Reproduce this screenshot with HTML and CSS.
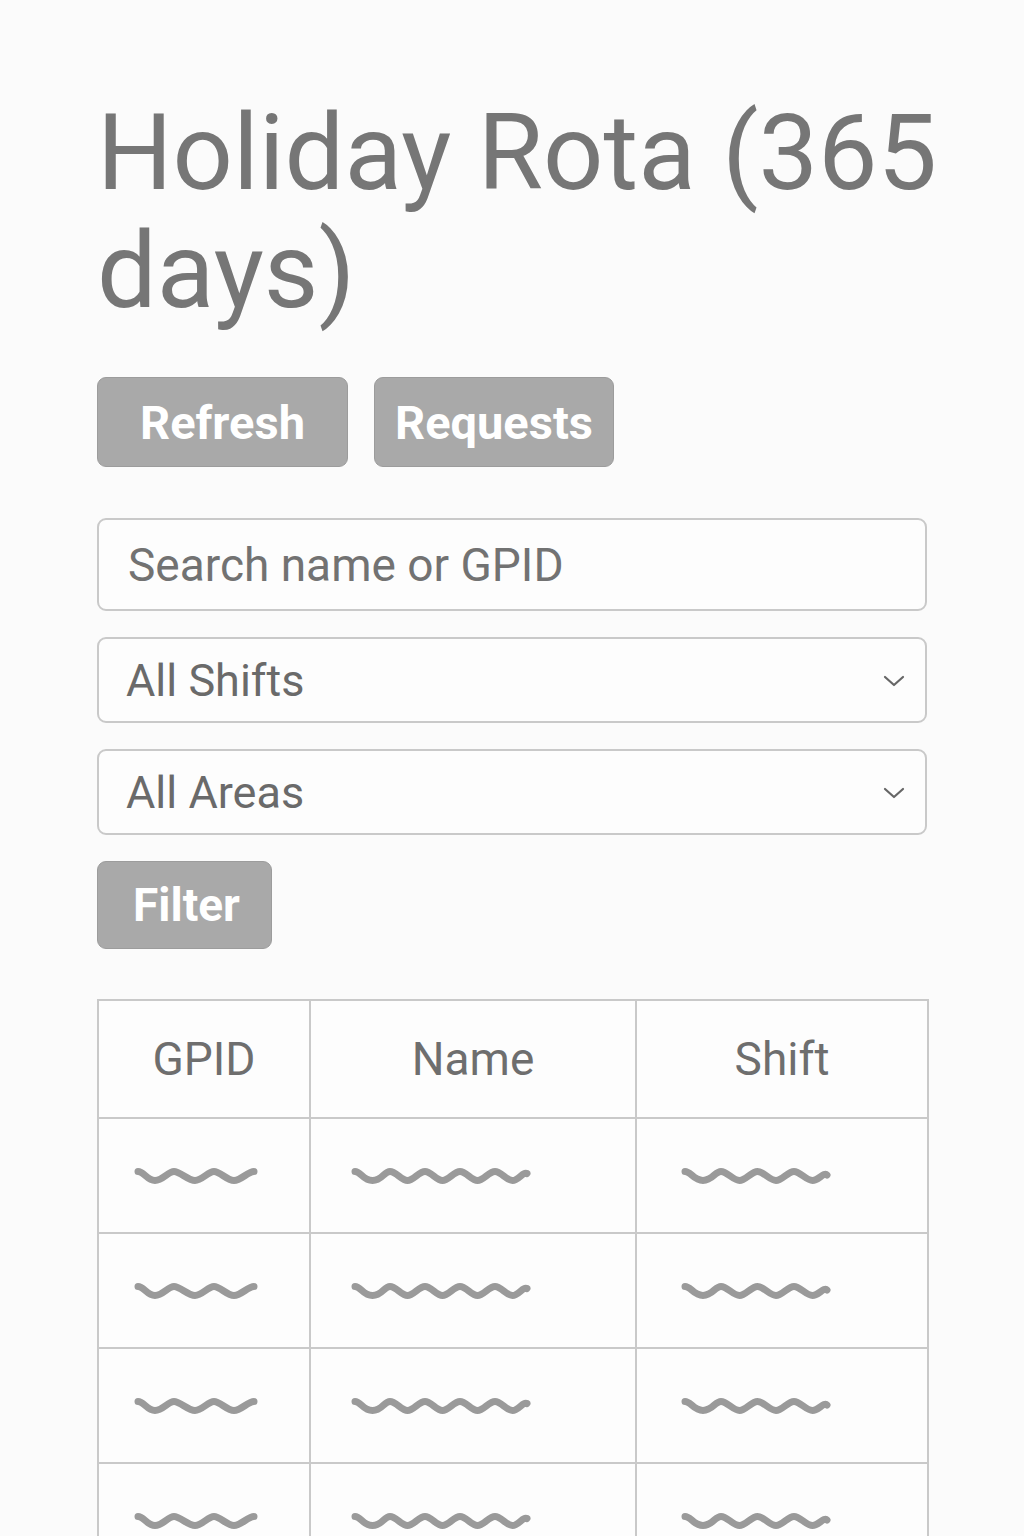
FILE: index.html
```html
<!DOCTYPE html>
<html lang="en">
<head>
<meta charset="utf-8">
<title>Holiday Rota</title>
<link rel="stylesheet" href="styles.css">
</head>
<body>
<main class="page">
  <h1 class="title">Holiday Rota (365 days)</h1>
  <div class="actions">
    <button class="btn btn-refresh">Refresh</button>
    <button class="btn btn-requests">Requests</button>
  </div>
  <form class="filters">
    <input class="field search" type="text" placeholder="Search name or GPID">
    <div class="select-wrap">
      <select class="field select"><option>All Shifts</option></select>
      <svg class="chevron" width="22" height="12" viewBox="0 0 22 12"><path d="M2 2 L11 10 L20 2" fill="none" stroke="#666" stroke-width="2.2" stroke-linecap="round" stroke-linejoin="round"/></svg>
    </div>
    <div class="select-wrap">
      <select class="field select"><option>All Areas</option></select>
      <svg class="chevron" width="22" height="12" viewBox="0 0 22 12"><path d="M2 2 L11 10 L20 2" fill="none" stroke="#666" stroke-width="2.2" stroke-linecap="round" stroke-linejoin="round"/></svg>
    </div>
    <div><button type="button" class="btn btn-filter">Filter</button></div>
  </form>
  <table class="rota">
    <colgroup>
      <col class="col-gpid"><col class="col-name"><col class="col-shift">
    </colgroup>
    <thead>
      <tr><th>GPID</th><th>Name</th><th>Shift</th></tr>
    </thead>
    <tbody>
      <tr>
        <td class="td-gpid"><svg class="sq" width="124" height="22" viewBox="0 0 124 22"><path d="M4 6.5 C10 6.5 13 15.5 21 15.5 S34 6.5 40 6.5 S54 15.5 61 15.5 S74 6.5 80 6.5 S93 15.5 100 15.5 S114 6.5 120 6.5" fill="none" stroke="#9a9a9a" stroke-width="7" stroke-linecap="round"/></svg></td>
        <td class="td-name"><svg class="sq" width="180" height="22" viewBox="0 0 180 22"><path d="M4 6.5 C10 6.5 12 15.5 21.5 15.5 S33 6.5 39 6.5 S50.5 15.5 56.5 15.5 S68 6.5 74 6.5 S85.5 15.5 91.5 15.5 S103 6.5 109 6.5 S120.5 15.5 126.5 15.5 S138 6.5 144 6.5 S155.5 15.5 161.5 15.5 S172 6.5 176 8.5" fill="none" stroke="#9a9a9a" stroke-width="7" stroke-linecap="round"/></svg></td>
        <td class="td-shift"><svg class="sq" width="150" height="22" viewBox="0 0 150 22"><path d="M4 6.5 C10 6.5 12.5 15.5 22 15.5 S34 6.5 40 6.5 S52.5 15.5 58.5 15.5 S70.5 6.5 76.5 6.5 S89 15.5 95 15.5 S107 6.5 113 6.5 S125.5 15.5 131.5 15.5 S143 6.5 146 10" fill="none" stroke="#9a9a9a" stroke-width="7" stroke-linecap="round"/></svg></td>
      </tr>
      <tr>
        <td class="td-gpid"><svg class="sq" width="124" height="22" viewBox="0 0 124 22"><path d="M4 6.5 C10 6.5 13 15.5 21 15.5 S34 6.5 40 6.5 S54 15.5 61 15.5 S74 6.5 80 6.5 S93 15.5 100 15.5 S114 6.5 120 6.5" fill="none" stroke="#9a9a9a" stroke-width="7" stroke-linecap="round"/></svg></td>
        <td class="td-name"><svg class="sq" width="180" height="22" viewBox="0 0 180 22"><path d="M4 6.5 C10 6.5 12 15.5 21.5 15.5 S33 6.5 39 6.5 S50.5 15.5 56.5 15.5 S68 6.5 74 6.5 S85.5 15.5 91.5 15.5 S103 6.5 109 6.5 S120.5 15.5 126.5 15.5 S138 6.5 144 6.5 S155.5 15.5 161.5 15.5 S172 6.5 176 8.5" fill="none" stroke="#9a9a9a" stroke-width="7" stroke-linecap="round"/></svg></td>
        <td class="td-shift"><svg class="sq" width="150" height="22" viewBox="0 0 150 22"><path d="M4 6.5 C10 6.5 12.5 15.5 22 15.5 S34 6.5 40 6.5 S52.5 15.5 58.5 15.5 S70.5 6.5 76.5 6.5 S89 15.5 95 15.5 S107 6.5 113 6.5 S125.5 15.5 131.5 15.5 S143 6.5 146 10" fill="none" stroke="#9a9a9a" stroke-width="7" stroke-linecap="round"/></svg></td>
      </tr>
      <tr>
        <td class="td-gpid"><svg class="sq" width="124" height="22" viewBox="0 0 124 22"><path d="M4 6.5 C10 6.5 13 15.5 21 15.5 S34 6.5 40 6.5 S54 15.5 61 15.5 S74 6.5 80 6.5 S93 15.5 100 15.5 S114 6.5 120 6.5" fill="none" stroke="#9a9a9a" stroke-width="7" stroke-linecap="round"/></svg></td>
        <td class="td-name"><svg class="sq" width="180" height="22" viewBox="0 0 180 22"><path d="M4 6.5 C10 6.5 12 15.5 21.5 15.5 S33 6.5 39 6.5 S50.5 15.5 56.5 15.5 S68 6.5 74 6.5 S85.5 15.5 91.5 15.5 S103 6.5 109 6.5 S120.5 15.5 126.5 15.5 S138 6.5 144 6.5 S155.5 15.5 161.5 15.5 S172 6.5 176 8.5" fill="none" stroke="#9a9a9a" stroke-width="7" stroke-linecap="round"/></svg></td>
        <td class="td-shift"><svg class="sq" width="150" height="22" viewBox="0 0 150 22"><path d="M4 6.5 C10 6.5 12.5 15.5 22 15.5 S34 6.5 40 6.5 S52.5 15.5 58.5 15.5 S70.5 6.5 76.5 6.5 S89 15.5 95 15.5 S107 6.5 113 6.5 S125.5 15.5 131.5 15.5 S143 6.5 146 10" fill="none" stroke="#9a9a9a" stroke-width="7" stroke-linecap="round"/></svg></td>
      </tr>
      <tr>
        <td class="td-gpid"><svg class="sq" width="124" height="22" viewBox="0 0 124 22"><path d="M4 6.5 C10 6.5 13 15.5 21 15.5 S34 6.5 40 6.5 S54 15.5 61 15.5 S74 6.5 80 6.5 S93 15.5 100 15.5 S114 6.5 120 6.5" fill="none" stroke="#9a9a9a" stroke-width="7" stroke-linecap="round"/></svg></td>
        <td class="td-name"><svg class="sq" width="180" height="22" viewBox="0 0 180 22"><path d="M4 6.5 C10 6.5 12 15.5 21.5 15.5 S33 6.5 39 6.5 S50.5 15.5 56.5 15.5 S68 6.5 74 6.5 S85.5 15.5 91.5 15.5 S103 6.5 109 6.5 S120.5 15.5 126.5 15.5 S138 6.5 144 6.5 S155.5 15.5 161.5 15.5 S172 6.5 176 8.5" fill="none" stroke="#9a9a9a" stroke-width="7" stroke-linecap="round"/></svg></td>
        <td class="td-shift"><svg class="sq" width="150" height="22" viewBox="0 0 150 22"><path d="M4 6.5 C10 6.5 12.5 15.5 22 15.5 S34 6.5 40 6.5 S52.5 15.5 58.5 15.5 S70.5 6.5 76.5 6.5 S89 15.5 95 15.5 S107 6.5 113 6.5 S125.5 15.5 131.5 15.5 S143 6.5 146 10" fill="none" stroke="#9a9a9a" stroke-width="7" stroke-linecap="round"/></svg></td>
      </tr>
    </tbody>
  </table>
</main>
</body>
</html>
```

FILE: styles.css
```css
html, body {
  margin: 0;
  padding: 0;
  background: #fbfbfb;
}

body {
  font-family: Roboto, "Liberation Sans", Arial, sans-serif;
  color: #777;
}

.page {
  width: 830px;
  padding: 94px 0 0 97px;
}

.title {
  width: 860px;
  margin: 0;
  font-size: 106px;
  line-height: 118px;
  font-weight: 400;
  color: #767676;
}

.actions {
  display: flex;
  gap: 26px;
  margin-top: 47px;
}

.btn {
  height: 90px;
  padding: 0;
  background: #a9a9a9;
  border: 1px solid #9c9c9c;
  border-radius: 9px;
  color: #fff;
  font-family: Roboto, "Liberation Sans", Arial, sans-serif;
  font-weight: 700;
  font-size: 47px;
  cursor: pointer;
}

.btn-refresh { width: 251px; }
.btn-requests { width: 240px; }
.btn-filter { width: 175px; height: 88px; font-size: 46px; padding-left: 4px; }

.filters {
  display: flex;
  flex-direction: column;
  gap: 26px;
  margin-top: 51px;
}

.field {
  display: block;
  width: 100%;
  box-sizing: border-box;
  border: 2px solid #c9c9c9;
  border-radius: 9px;
  background: #fdfdfd;
  font-family: Roboto, "Liberation Sans", Arial, sans-serif;
  color: #6a6a6a;
  outline: none;
}

.search {
  height: 93px;
  padding: 0 29px;
  font-size: 46px;
}

.search::placeholder {
  color: #727272;
}

.select-wrap {
  position: relative;
}

.select {
  height: 86px;
  padding: 0 27px;
  font-size: 45px;
  appearance: none;
  -webkit-appearance: none;
}

.chevron {
  position: absolute;
  right: 22px;
  top: 38px;
  pointer-events: none;
}

.rota {
  margin-top: 50px;
  width: 830px;
  table-layout: fixed;
  border-collapse: collapse;
  background: #fdfdfd;
}

.col-gpid { width: 212px; }
.col-name { width: 326px; }
.col-shift { width: 292px; }

.rota th, .rota td {
  border: 2px solid #c9c9c9;
}

.rota th {
  height: 116px;
  padding: 0;
  font-size: 46px;
  font-weight: 400;
  color: #6e6e6e;
  text-align: center;
}

.rota td {
  height: 113px;
  padding: 0;
  text-align: left;
  vertical-align: middle;
}

.rota .td-gpid { padding-left: 35px; }
.rota .td-name { padding-left: 40px; }
.rota .td-shift { padding-left: 44px; }

.sq {
  display: block;
}
```
